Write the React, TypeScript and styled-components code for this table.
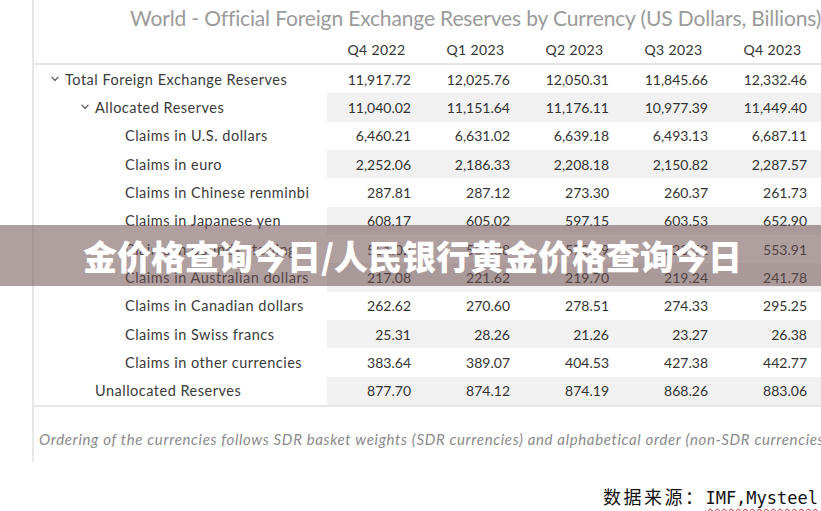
import React from "react";
import styled, { createGlobalStyle } from "styled-components";

const GlobalStyle = createGlobalStyle`
  html, body { margin: 0; padding: 0; background: #ffffff; }
  body { width: 821px; height: 511px; overflow: hidden; }
`;

const Page = styled.div`
  position: relative;
  width: 821px;
  height: 511px;
  overflow: hidden;
  display: flex;
  flex-direction: column;
  font-family: Lato, "Noto Sans", sans-serif;
`;

const Panel = styled.section`
  margin-left: 32px;
  width: 840px;
  height: 462px;
  border-left: 2px solid #e8e8e8;
  display: flex;
  flex-direction: column;
  flex-shrink: 0;
`;

const Title = styled.h1`
  margin: 0;
  height: 36px;
  padding-left: 96px;
  font-family: Lato, "Noto Sans", sans-serif;
  font-weight: 400;
  font-size: 21px;
  line-height: 36px;
  color: #9a9a9a;
  white-space: nowrap;
  letter-spacing: -0.15px;
`;

const Table = styled.div`
  display: flex;
  flex-direction: column;
  width: 788px;
  border-bottom: 2px solid #e6e6e6;
`;

const Row = styled.div<{ $head?: boolean }>`
  display: grid;
  grid-template-columns: 293px repeat(5, 99px);
  height: ${(p) => (p.$head ? "27px" : "28.33px")};
  border-bottom: ${(p) => (p.$head ? "2px solid #e6e6e6" : "none")};
  align-items: stretch;
`;

const HeadCell = styled.div`
  display: flex;
  align-items: center;
  justify-content: center;
  font-size: 14px;
  letter-spacing: 0.4px;
  color: #333333;
`;

const LabelCell = styled.div<{ $level: number }>`
  display: flex;
  align-items: center;
  gap: 6px;
  padding-left: ${(p) => 17 + p.$level * 30}px;
  font-size: 14.5px;
  letter-spacing: 0.5px;
  color: #3a3a3a;
  white-space: nowrap;
`;

const NumCell = styled.div<{ $shaded: boolean }>`
  display: flex;
  align-items: center;
  justify-content: flex-end;
  padding-right: 15px;
  font-size: 14px;
  color: #333333;
  background: ${(p) => (p.$shaded ? "#f1f1f1" : "transparent")};
`;

const Spacer = styled.span`
  width: 8px;
  flex-shrink: 0;
`;

const Chevron = styled.svg`
  width: 8px;
  height: 6px;
  flex-shrink: 0;
`;

const Footnote = styled.p`
  margin: 22px 0 0 5px;
  font-size: 15px;
  line-height: 20px;
  font-style: italic;
  letter-spacing: 0.65px;
  color: #8a8a8a;
  white-space: nowrap;
`;

const Source = styled.div`
  margin-top: 22px;
  align-self: flex-end;
  padding-right: 3px;
  display: flex;
  align-items: baseline;
  line-height: 24px;
  color: #111111;
`;

const SourceLabel = styled.span`
  font-family: "Noto Sans CJK SC", sans-serif;
  font-size: 18px;
  letter-spacing: 2.5px;
`;

const SourceName = styled.span`
  font-family: "DejaVu Sans Mono", "Liberation Mono", monospace;
  font-size: 17px;
  text-decoration: underline wavy #d42020;
  text-decoration-thickness: 1px;
  text-underline-offset: 4px;
`;

const Banner = styled.div`
  position: absolute;
  left: 0;
  right: 0;
  top: 225px;
  height: 61px;
  background: rgba(110, 80, 80, 0.55);
  display: flex;
  align-items: center;
  justify-content: center;
`;

const BannerText = styled.div`
  font-family: "Noto Sans CJK SC", sans-serif;
  font-weight: 900;
  font-size: 34px;
  color: #ffffff;
  white-space: nowrap;
  padding-left: 4px;
`;

type RowData = { label: string; level: number; expand?: boolean; values: string[] };

const rows: RowData[] = [
  { label: "Total Foreign Exchange Reserves", level: 0, expand: true, values: ["11,917.72", "12,025.76", "12,050.31", "11,845.66", "12,332.46"] },
  { label: "Allocated Reserves", level: 1, expand: true, values: ["11,040.02", "11,151.64", "11,176.11", "10,977.39", "11,449.40"] },
  { label: "Claims in U.S. dollars", level: 2, values: ["6,460.21", "6,631.02", "6,639.18", "6,493.13", "6,687.11"] },
  { label: "Claims in euro", level: 2, values: ["2,252.06", "2,186.33", "2,208.18", "2,150.82", "2,287.57"] },
  { label: "Claims in Chinese renminbi", level: 2, values: ["287.81", "287.12", "273.30", "260.37", "261.73"] },
  { label: "Claims in Japanese yen", level: 2, values: ["608.17", "605.02", "597.15", "603.53", "652.90"] },
  { label: "Claims in pounds sterling", level: 2, values: ["551.02", "556.38", "573.39", "523.52", "553.91"] },
  { label: "Claims in Australian dollars", level: 2, values: ["217.08", "221.62", "219.70", "219.24", "241.78"] },
  { label: "Claims in Canadian dollars", level: 2, values: ["262.62", "270.60", "278.51", "274.33", "295.25"] },
  { label: "Claims in Swiss francs", level: 2, values: ["25.31", "28.26", "21.26", "23.27", "26.38"] },
  { label: "Claims in other currencies", level: 2, values: ["383.64", "389.07", "404.53", "427.38", "442.77"] },
  { label: "Unallocated Reserves", level: 1, values: ["877.70", "874.12", "874.19", "868.26", "883.06"] },
];

const quarters = ["Q4 2022", "Q1 2023", "Q2 2023", "Q3 2023", "Q4 2023"];

const ChevronIcon = () => (
  <Chevron viewBox="0 0 8 6">
    <polyline points="1,1.2 4,4.4 7,1.2" fill="none" stroke="#6a6a6a" strokeWidth="1.4" strokeLinecap="round" strokeLinejoin="round" />
  </Chevron>
);

export default function App() {
  return (
    <Page>
      <GlobalStyle />
      <Panel>
        <Title>World - Official Foreign Exchange Reserves by Currency (US Dollars, Billions)</Title>
        <Table>
          <Row $head>
            <div />
            {quarters.map((q) => (
              <HeadCell key={q}>{q}</HeadCell>
            ))}
          </Row>
          {rows.map((r, i) => (
            <Row key={r.label}>
              <LabelCell $level={r.level}>
                {r.expand ? <ChevronIcon /> : <Spacer />}
                <span>{r.label}</span>
              </LabelCell>
              {r.values.map((v, j) => (
                <NumCell key={j} $shaded={i % 2 === 1}>
                  {v}
                </NumCell>
              ))}
            </Row>
          ))}
        </Table>
        <Footnote>
          Ordering of the currencies follows SDR basket weights (SDR currencies) and alphabetical order (non-SDR currencies)
        </Footnote>
      </Panel>
      <Source>
        <SourceLabel>数据来源：</SourceLabel>
        <SourceName>IMF,Mysteel</SourceName>
      </Source>
      <Banner>
        <BannerText>金价格查询今日/人民银行黄金价格查询今日</BannerText>
      </Banner>
    </Page>
  );
}
